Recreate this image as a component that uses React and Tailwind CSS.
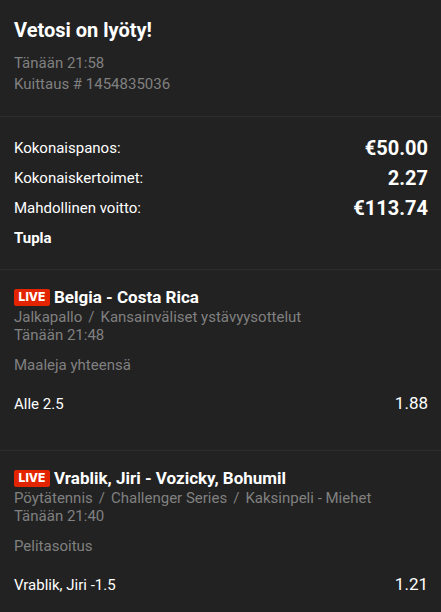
import React from 'react';

const bets = [
  {
    title: 'Belgia - Costa Rica',
    path: ['Jalkapallo', 'Kansainväliset ystävyysottelut'],
    time: 'Tänään 21:48',
    market: 'Maaleja yhteensä',
    pick: 'Alle 2.5',
    odds: '1.88',
  },
  {
    title: 'Vrablik, Jiri - Vozicky, Bohumil',
    path: ['Pöytätennis', 'Challenger Series', 'Kaksinpeli - Miehet'],
    time: 'Tänään 21:40',
    market: 'Pelitasoitus',
    pick: 'Vrablik, Jiri -1.5',
    odds: '1.21',
  },
];

function TotalRow({ label, value }) {
  return (
    <div className="flex h-[30px] items-center justify-between">
      <dt>{label}</dt>
      <dd className="text-xl font-bold">{value}</dd>
    </div>
  );
}

function Bet({ bet }) {
  return (
    <section className="border-t border-[#2c2c2c] pt-4 pr-[13px] pb-[34px] pl-3.5">
      <div className="flex h-[22px] items-center gap-1">
        <span className="flex h-[17px] w-9 items-center justify-center rounded-xs bg-[#e32400] pb-px font-['Inter',sans-serif] text-xs font-extrabold">
          LIVE
        </span>
        <h2 className="text-[17px] leading-5 font-bold">{bet.title}</h2>
      </div>
      <p className="text-[15px] leading-[18px] text-[#808080]">
        {bet.path.map((part, i) => (
          <React.Fragment key={part}>
            {i > 0 && <span className="mx-1.5">/</span>}
            {part}
          </React.Fragment>
        ))}
      </p>
      <p className="text-[15px] leading-[18px] text-[#808080]">{bet.time}</p>
      <p className="mt-3 text-[15px] leading-[18px] text-[#808080]">{bet.market}</p>
      <div className="mt-[18px] flex h-6 items-center justify-between">
        <span className="text-[15px]">{bet.pick}</span>
        <span className="text-[17px]">{bet.odds}</span>
      </div>
    </section>
  );
}

export default function App() {
  return (
    <main className="min-h-screen bg-[#222222] font-['Roboto',sans-serif] text-white">
      <header className="px-3.5 pt-[18px] pb-[21px]">
        <h1 className="text-xl leading-6 font-bold">Vetosi on lyöty!</h1>
        <p className="mt-[11px] text-[15px] leading-[21px] text-[#808080]">Tänään 21:58</p>
        <p className="text-[15px] leading-[21px] text-[#808080]">Kuittaus # 1454835036</p>
      </header>

      <section className="border-t border-[#2c2c2c] py-4 pr-[13px] pl-3.5 text-[15px]">
        <dl>
          <TotalRow label="Kokonaispanos:" value="€50.00" />
          <TotalRow label="Kokonaiskertoimet:" value="2.27" />
          <TotalRow label="Mahdollinen voitto:" value="€113.74" />
        </dl>
        <p className="flex h-[30px] items-center font-bold">Tupla</p>
      </section>

      {bets.map((bet) => (
        <Bet key={bet.title} bet={bet} />
      ))}
    </main>
  );
}
